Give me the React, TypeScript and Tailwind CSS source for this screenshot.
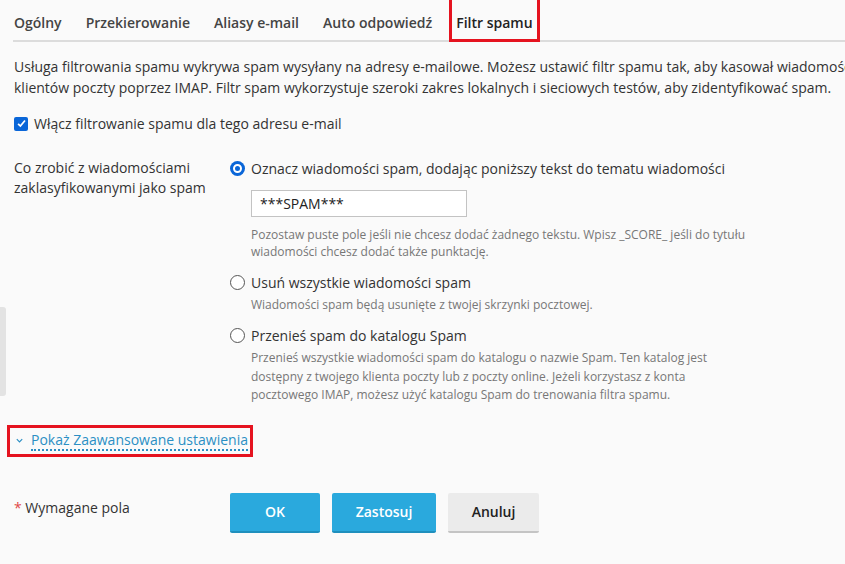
import React from 'react'

const tabs = ['Ogólny', 'Przekierowanie', 'Aliasy e-mail', 'Auto odpowiedź', 'Filtr spamu']

function Radio({ checked }: { checked?: boolean }) {
	return checked ? (
		<span className="mt-[3px] flex size-[15px] shrink-0 items-center justify-center rounded-full bg-[#0a66d8]">
			<span className="size-[9px] rounded-full border-2 border-white bg-[#0a66d8]" />
		</span>
	) : (
		<span className="mt-[3px] size-[15px] shrink-0 rounded-full border border-[#555] bg-white" />
	)
}

function Option({ checked, label, children }: { checked?: boolean; label: string; children?: React.ReactNode }) {
	return (
		<div className="flex gap-[6px]">
			<Radio checked={checked} />
			<div className="flex flex-col">
				<span className="text-[14px] leading-[21px] text-[#333]">{label}</span>
				{children}
			</div>
		</div>
	)
}

export default function App() {
	return (
		<div
			className="relative h-[564px] w-[845px] overflow-hidden bg-[#fafafa] text-[#333]"
			style={{ fontFamily: '"Open Sans", "Noto Sans", sans-serif' }}
		>
			<div className="absolute left-0 top-[307px] h-[89px] w-[6px] rounded-r-[3px] bg-[#e3e3e3]" />

			<div className="ml-[13px] flex h-[42px] items-end gap-[24px] border-b-2 border-[#dcdcdc] pl-px">
				{tabs.map((t, i) => (
					<div key={t} className="relative pb-[6px]">
						<span
							className={
								'text-[14px] font-[550] leading-[21px] ' + (i === 4 ? 'text-[#222]' : 'text-[#444]')
							}
						>
							{t}
						</span>
						{i === 4 && (
							<div className="absolute -left-[7px] -right-[7px] -bottom-[2px] top-[-42px] border-[3px] border-[#e5131f]" />
						)}
					</div>
				))}
			</div>

			<div className="mt-[14px] ml-[14px] overflow-hidden">
				<p className="whitespace-nowrap text-[14px] leading-[21px] text-[#333]">
					Usługa filtrowania spamu wykrywa spam wysyłany na adresy e-mailowe. Możesz ustawić filtr spamu tak, aby
					kasował wiadomości spam lub przenosił je do katalogu Spam dostępnego z
					<br />
					klientów poczty poprzez IMAP. Filtr spam wykorzystuje szeroki zakres lokalnych i sieciowych testów, aby
					zidentyfikować spam.
				</p>
			</div>

			<label className="ml-[14px] mt-[15px] flex items-center gap-[6px]">
				<span className="flex size-[14px] items-center justify-center rounded-[2px] bg-[#0a66d8]">
					<svg viewBox="0 0 12 12" className="size-[11px]">
						<path d="M2.3 6.3 L4.8 8.8 L9.8 2.8" fill="none" stroke="white" strokeWidth="1.9" />
					</svg>
				</span>
				<span className="text-[14px] leading-[21px]">Włącz filtrowanie spamu dla tego adresu e-mail</span>
			</label>

			<div className="mt-[24px] flex">
				<div className="ml-[14px] w-[216px] text-[14px] leading-[20px] text-[#333]">
					Co zrobić z wiadomościami
					<br />
					zaklasyfikowanymi jako spam
				</div>
				<div className="flex flex-col gap-[12px]">
					<Option checked label="Oznacz wiadomości spam, dodając poniższy tekst do tematu wiadomości">
						<div className="mt-[11px] flex h-[27px] w-[216px] items-center border border-[#c3c3c3] bg-white px-[8px] text-[14px] text-[#222]">
							***SPAM***
						</div>
						<p className="mt-[9px] text-[12px] leading-[17px] text-[#777]">
							Pozostaw puste pole jeśli nie chcesz dodać żadnego tekstu. Wpisz _SCORE_ jeśli do tytułu
							<br />
							wiadomości chcesz dodać także punktację.
						</p>
					</Option>
					<Option label="Usuń wszystkie wiadomości spam">
						<p className="mt-[3px] text-[12px] leading-[17px] text-[#777]">
							Wiadomości spam będą usunięte z twojej skrzynki pocztowej.
						</p>
					</Option>
					<Option label="Przenieś spam do katalogu Spam">
						<p className="mt-[3px] text-[12px] leading-[18.5px] text-[#777]">
							Przenieś wszystkie wiadomości spam do katalogu o nazwie Spam. Ten katalog jest
							<br />
							dostępny z twojego klienta poczty lub z poczty online. Jeżeli korzystasz z konta
							<br />
							pocztowego IMAP, możesz użyć katalogu Spam do trenowania filtra spamu.
						</p>
					</Option>
				</div>
			</div>

			<div className="ml-[7px] mt-[20px] flex h-[32px] w-[246px] items-center gap-[7px] border-[3px] border-[#e5131f] pl-[5px]">
				<svg viewBox="0 0 10 10" className="size-[9px]">
					<path d="M2 3.5 L5 6.5 L8 3.5" fill="none" stroke="#2b8fc4" strokeWidth="1.3" />
				</svg>
				<span className="border-b-2 border-dotted border-[#2b8fc4] text-[14px] leading-[18px] text-[#2b8fc4]">
					Pokaż Zaawansowane ustawienia
				</span>
			</div>

			<div className="mt-[36px] flex items-start">
				<div className="ml-[14px] w-[216px] pt-[4px] text-[14px] leading-[21px] text-[#333]">
					<span className="text-[#e04848]">*</span> Wymagane pola
				</div>
				<div className="flex gap-[12px]">
					<button className="h-[40px] w-[90px] rounded-[2px] border-b-2 border-[#1f8fbd] bg-[#2aa9dd] text-[14px] font-semibold text-white">
						OK
					</button>
					<button className="h-[40px] w-[104px] rounded-[2px] border-b-2 border-[#1f8fbd] bg-[#2aa9dd] text-[14px] font-semibold text-white">
						Zastosuj
					</button>
					<button className="h-[40px] w-[91px] rounded-[2px] border-b-2 border-[#c4c4c4] bg-[#ebebeb] text-[14px] font-semibold text-[#222]">
						Anuluj
					</button>
				</div>
			</div>
		</div>
	)
}
